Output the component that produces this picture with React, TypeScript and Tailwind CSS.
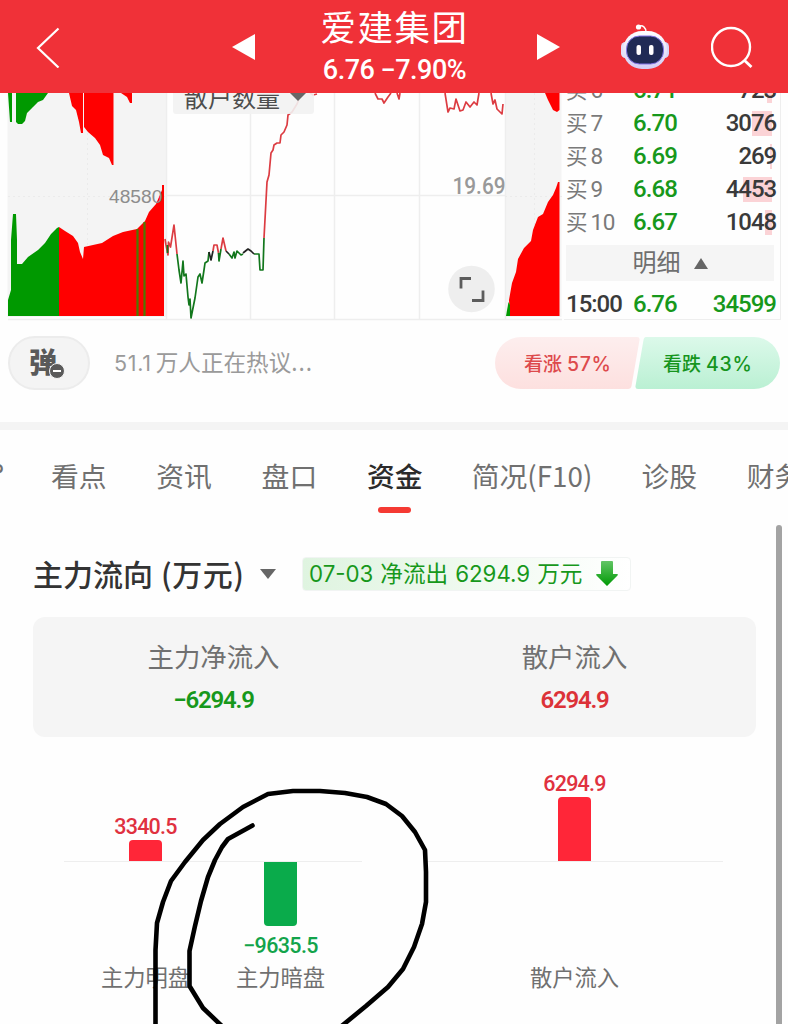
import React from "react";

interface OrderRow {
  level: string;
  price: string;
  volume: string;
  depth: number;
}

const orders: OrderRow[] = [
  { level: "6", price: "6.71", volume: "723", depth: 5 },
  { level: "7", price: "6.70", volume: "3076", depth: 20 },
  { level: "8", price: "6.69", volume: "269", depth: 2 },
  { level: "9", price: "6.68", volume: "4453", depth: 29 },
  { level: "10", price: "6.67", volume: "1048", depth: 7 },
];

const tabs = [
  { name: "看点", width: "w-[55px]" },
  { name: "资讯", width: "w-[55px]" },
  { name: "盘口", width: "w-[55px]" },
  { name: "资金", width: "w-[55px]", active: true },
  { name: "简况(F10)", width: "w-[119px]" },
  { name: "诊股", width: "w-[55px]" },
  { name: "财务", width: "w-[55px]" },
];

const RobotIcon = () => (
  <svg className="h-[48px] w-[50px]" viewBox="0 0 50 48">
    <defs>
      <linearGradient id="shell" x1="0" y1="0" x2="0" y2="1">
        <stop offset="0" stopColor="#ffffff" />
        <stop offset="1" stopColor="#d3cdf5" />
      </linearGradient>
    </defs>
    <circle cx="18.500" cy="4" r="2.600" fill="#fff" />
    <path d="M18 3.500c5-2 8 1 8 6" fill="none" stroke="#fff" strokeWidth="1.500" />
    <rect x="1" y="19" width="9" height="16" rx="4.500" fill="#e3dff9" />
    <rect x="40" y="19" width="9" height="16" rx="4.500" fill="#d9d5f7" />
    <rect x="3" y="8" width="44" height="38" rx="19" fill="url(#shell)" />
    <rect x="6.500" y="13" width="37" height="28" rx="13" fill="#202b55" stroke="#8374e6" strokeWidth="1" />
    <rect x="16.500" y="22" width="4.500" height="10" rx="2" fill="#fff" />
    <rect x="29" y="22" width="4.500" height="10" rx="2" fill="#fff" />
  </svg>
);

const Header = () => (
  <header className="flex h-[93px] items-center bg-[#f03138] text-white">
    <svg className="ml-9 h-[42px] w-6" viewBox="0 0 24 42" fill="none" stroke="#fff" strokeWidth="2.200">
      <path d="M22.500 2.500 2 22l20.500 19.500" />
    </svg>
    <svg className="ml-[172px] h-[26px] w-6" viewBox="0 0 24 26" fill="#fff">
      <path d="M0 13 23 0v26z" />
    </svg>
    <div className="ml-[50px] flex w-[177px] flex-col items-center">
      <h1 className="-mt-[3px] h-[46px] text-[35.500px] leading-[46px] font-normal tracking-[1.5px] whitespace-nowrap">爱建集团</h1>
      <p className="mt-[3px] h-[36px] font-[Roboto] text-[27px] leading-[36px] font-medium tracking-[-0.5px] whitespace-nowrap">
        6.76 −7.90%
      </p>
    </div>
    <svg className="ml-[54px] h-[26px] w-6" viewBox="0 0 24 26" fill="#fff">
      <path d="M23 13 0 0v26z" />
    </svg>
    <div className="ml-[59px]">
      <RobotIcon />
    </div>
    <svg className="ml-[41px] h-[42px] w-[42px]" viewBox="0 0 42 42" fill="none" stroke="#fff" strokeWidth="2.400">
      <circle cx="20" cy="21" r="19" />
      <path d="m33 34 7.500 7" strokeWidth="2.800" />
    </svg>
  </header>
);

// three panes: volume profile, intraday line, volume profile of the current day
const MarketChart = () => (
  <svg className="h-[229px] w-[564px] shrink-0" viewBox="0 93 564 229">
    <rect x="7.500" y="93" width="158.500" height="224" fill="#f4f4f4" />
    <rect x="505.500" y="93" width="56" height="224" fill="#f4f4f4" />
    <path
      d="M166.500 93v227M250.500 93v227M334.500 93v227M419.500 93v227M505.500 93v227M166 195.500h339M8 319.500h554"
      fill="none"
      stroke="#eeeeee"
      strokeWidth="1.500"
    />
    <path d="M8 196.500h158M87.500 93v224M505 196.500h57M534.500 93v224" stroke="#ebebeb" strokeDasharray="2 3" />

    <g fill="#009900">
      <path d="M8 93 10 122h2V93zM16 93v29l2 2h4l3-3 2-8 6-6 5-5 5-2 5-7z" />
      <path d="M8 316v-16l3-10v-50l2-26h3l1 26v24h5l6-7 10-7 7-7 6-9 6-6 2-1v89z" />
    </g>
    <g fill="#ff0000">
      <path d="M69 93l3 13 4 4 3 12 2 11h2V93zM84 93v34l4 5 7 6 5 7 3 10 6 3 3 7h1.500V93zM121 93l6 4 3 6h2V93z" />
      <path d="M59 227l6 4 8 5 5 7 2 9 3 7 1-12 18-4 11-7 10-4 14-3 8-8 4-9 7-8 6-14v-5h2v131H59z" />
      <path d="M510 316l-1-16 3-17 4-11 2-13 6-11 7-7 2-11 5-13 5-3 5-12 5-7 3-7 2-6h1.500v134z" />
      <path d="M545 93l3 7 5 10 4 2 2.500-2V93z" />
    </g>
    <path d="M137.500 229v87M144.500 222v94" stroke="#4c7a00" strokeWidth="2.200" />
    <path d="M506 316l2.500-14 1.500 3v11z" fill="#009900" />
    <text x="109" y="202.500" fontSize="19.200" fill="#8d8d8d" fontFamily="Liberation Sans, sans-serif">48580</text>

    <g fill="none" strokeWidth="1.700" strokeLinejoin="round">
      <path
        stroke="#dc3c42"
        d="M165 239l1 6 2 10 .5-13 2 5 3.500-22 3 29M213 251l1-6h3l1.500 8M221 249l2-11 3 13M264 238l3-56 2-7 2-22 2-3 1-5 3-2h3l1-8 3-3 3-7 1-10 4-3 5-8 2-5 2-6M310 93l3 2 4-1"
      />
      <path stroke="#dc3c42" d="M375 93l3 6 4 0 2 4 4-6 3-4M397 93l2 6 1-6M445 93l3 19 2-4 4 1 2-10 4 12 3-1 3-8 4 5 4-5 3 3 2-12M491 93l2 11 2-4 2 9 5 5 1-10" />
      <path
        stroke="#12771c"
        d="M167.500 245v8M177 254l2 16 2 13 2-22 1 15 2-2 2 23 1 8 1-6 1 19 4-20 3-21 2-3 2 9 2-13 1-7 3-2 1-9M218.500 253l.5 8 2-12M229 254l3 4 2-6 1 6 2-7 4 4 2-1M254 254h5l1 16h3l1-32"
      />
      <path stroke="#222" d="M209 252l2 8 2-9M226 251l3 3M243 253l5-4 3 2 3 3" />
    </g>

    <rect x="173" y="85" width="141" height="29" rx="3" fill="#f2f2f2" fillOpacity="0.900" />
    <text x="184" y="107" fontSize="24" fill="#4d4d4d" fontFamily="Noto Sans CJK SC, sans-serif">散户数量</text>
    <path d="M290 93h16l-8 8z" fill="#666" />
    <text
      x="452.500"
      y="193.500"
      fontSize="24"
      fontWeight="500"
      textLength="53"
      lengthAdjust="spacingAndGlyphs"
      fill="#999"
      fontFamily="Roboto, sans-serif"
    >
      19.69
    </text>
    <circle cx="471.500" cy="289" r="23.300" fill="#eeeeee" />
    <path d="M461 288.500V278.500h10M483 290.500v10h-11" fill="none" stroke="#5c5c5c" strokeWidth="2.800" />
  </svg>
);

const OrderBook = () => (
  <div className="h-[227px] w-[217px] border-r border-b border-[#eeeeee] pr-[4px] pl-[2px] font-[Roboto,'Noto_Sans_CJK_SC',sans-serif]">
    <div className="-mt-[19px]">
      {orders.map((row) => (
        <div key={row.level} className="flex h-[33px] items-center leading-[33px]">
          <span className="w-[67px] text-[21.5px] whitespace-nowrap text-[#7a7a7a]">
            买<span className="ml-[3px] text-[22.500px] tracking-[-0.5px]">{row.level}</span>
          </span>
          <span className="text-[24px] font-medium tracking-[-0.9px] text-[#17981b]">{row.price}</span>
          <div className="relative ml-auto flex h-[25px] items-center">
            <div className="absolute top-0 right-[4px] h-[25px] bg-[#fbd3d6]" style={{ width: row.depth }} />
            <span className="relative text-[24px] font-medium tracking-[-1.100px] text-[#3a3a3a]">{row.volume}</span>
          </div>
        </div>
      ))}
    </div>
    <div className="mt-[6px] flex h-[36px] w-[208px] items-center justify-center bg-[#f5f5f5] text-[24px] text-[#6f6f6f]">
      <span>明细</span>
      <svg className="ml-[13px] h-[11px] w-[14px]" viewBox="0 0 14 11" fill="#666">
        <path d="M7 0l7 11H0z" />
      </svg>
    </div>
    <div className="mt-[6px] flex h-[33px] items-center text-[24px] font-medium tracking-[-1px] text-[#17981b]">
      <span className="w-[67px] text-[#3a3a3a]">15:00</span>
      <span>6.76</span>
      <span className="ml-auto">34599</span>
    </div>
  </div>
);

const CommentBar = () => (
  <div className="flex h-[100px] items-start pt-[14px]">
    <div className="relative ml-2 flex h-[54px] w-[82px] items-center rounded-full border-2 border-[#ececec] bg-[#f4f4f4] pl-[19px]">
      <span className="-mt-1 text-[28px] leading-none font-black text-[#5a5a5a]">弹</span>
      <span className="absolute top-[25px] left-[39px] flex h-4 w-4 items-center justify-center rounded-full border border-[#f4f4f4] bg-[#5a5a5a]">
        <span className="h-[2px] w-2 bg-white" />
      </span>
    </div>
    <p className="-mt-[1px] ml-6 w-[220px] text-[22.600px] leading-[54px] whitespace-nowrap text-[#9a9a9a]">
      <span className="font-[Inter] text-[21.500px] tracking-[0.7px]">51.1</span>
      <span className="ml-[4px]">万人正在热议</span>
      <span className="tracking-[1px]">...</span>
    </p>
    <div className="relative ml-auto mr-[8px] mt-[1px] flex h-[52px] w-[285px] text-[19px] leading-[52px] font-medium">
      <svg className="absolute inset-0 h-[52px] w-[285px]" viewBox="0 0 285 52">
        <defs>
          <linearGradient id="rise" x1="0" y1="0" x2="0" y2="1">
            <stop offset="0" stopColor="#fdeeee" />
            <stop offset="1" stopColor="#fde0df" />
          </linearGradient>
          <linearGradient id="fall" x1="0" y1="0" x2="0" y2="1">
            <stop offset="0" stopColor="#dcf9ea" />
            <stop offset="1" stopColor="#baf0d3" />
          </linearGradient>
        </defs>
        <path d="M26 0H142q3 0 2.500 3l-8 46q-.5 3-3.500 3H26a26 26 0 0 1 0-52z" fill="url(#rise)" />
        <path d="M151 0H259a26 26 0 0 1 0 52H143q-3 0-2.500-3l8-46q.5-3 2.500-3z" fill="url(#fall)" />
      </svg>
      <span className="relative w-[143px] pl-[29px] whitespace-nowrap text-[#dd4a4c]">
        看涨<span className="ml-[5px] font-[Inter] text-[19.500px] tracking-[0.7px]">57%</span>
      </span>
      <span className="relative pl-[25px] whitespace-nowrap text-[#16951e]">
        看跌<span className="ml-[5px] font-[Inter] text-[19.500px] tracking-[0.7px]">43%</span>
      </span>
    </div>
  </div>
);

const TabBar = () => (
  <nav className="flex h-[95px] gap-[50.300px] overflow-hidden pt-[22px]">
    <span className="-mr-[3px] -ml-[49px] w-[53px] shrink-0 text-right font-[Inter] text-[24px] leading-[44px] text-[#707070]">
      ?
    </span>
    {tabs.map((tab) => (
      <div key={tab.name} className={`flex shrink-0 flex-col items-center ${tab.width}`}>
        <span
          className={`text-[27.800px] leading-[46px] whitespace-nowrap ${
            tab.active ? "font-medium text-[#2b2b2b]" : "text-[#707070]"
          }`}
        >
          {tab.name}
        </span>
        {tab.active && <span className="mt-[9px] h-[6px] w-[33px] rounded-full bg-[#f53a33]" />}
      </div>
    ))}
  </nav>
);

interface FlowBarProps {
  label: string;
  value: string;
  amount: number;
}

const FlowBar = ({ label, value, amount }: FlowBarProps) => {
  const up = amount > 0;
  return (
    <div className="flex w-[135px] flex-col items-center">
      <div className="flex h-[125px] flex-col items-center justify-end">
        {up && (
          <>
            <span className="-mb-[1px] font-[Roboto] text-[21.500px] leading-[28px] font-medium tracking-[-0.8px] text-[#e0313f]">
              {value}
            </span>
            <div className="w-[33px] rounded-t bg-[#ff2638]" style={{ height: amount }} />
          </>
        )}
      </div>
      <div className="flex h-[98px] flex-col items-center">
        {!up && (
          <>
            <div className="w-[33px] rounded-b bg-[#0aab4b]" style={{ height: -amount }} />
            <span className="mt-[6px] font-[Roboto] text-[21.500px] leading-[28px] font-medium tracking-[-0.6px] text-[#12a44b]">
              {value}
            </span>
          </>
        )}
      </div>
      <span className="-mt-[1px] text-[22.300px] leading-[34px] whitespace-nowrap text-[#707070]">{label}</span>
    </div>
  );
};

const FundFlow = () => (
  <section>
    <div className="flex h-[92px] items-center pt-[5px] pl-[33px]">
      <h2 className="-mt-[2px] w-[212px] text-[30px] leading-[40px] font-medium whitespace-nowrap text-[#333]">
        主力流向<span className="ml-[8px] tracking-[0.5px]">(万元)</span>
      </h2>
      <svg className="ml-[15px] h-[10px] w-4" viewBox="0 0 16 10" fill="#666">
        <path d="M0 0h16L8 10z" />
      </svg>
      <div className="ml-[26px] flex h-[34px] w-[329px] items-center rounded-sm border border-[#f1f4f3] bg-linear-to-r from-[#dff4e0] to-white pl-[6px] text-[22.600px] leading-[32px] whitespace-nowrap text-[#17981b]">
        <span className="-mt-[1px] w-[273px]">
          <span className="font-[Inter] text-[22.300px]">07-03</span>
          <span className="mx-[7px]">净流出</span>
          <span className="font-[Inter] text-[22.300px]">6294.9</span>
          <span className="ml-[7px]">万元</span>
        </span>
        <svg className="ml-[14px] h-[25px] w-[22px]" viewBox="0 0 22 25">
          <defs>
            <linearGradient id="down" x1="0" y1="0" x2="0" y2="1">
              <stop offset="0" stopColor="#62c565" />
              <stop offset="1" stopColor="#009a05" />
            </linearGradient>
          </defs>
          <path d="M6 0h10q1 0 1 1v12h4q1.500 0 .5 1.500L11 25 .5 14.500Q-.5 13 1 13h4V1q0-1 1-1z" fill="url(#down)" />
        </svg>
      </div>
    </div>
    <div className="ml-[33px] flex h-[120px] w-[723px] rounded-xl bg-[#f5f5f5] pt-[19px]">
      <div className="flex w-[361px] flex-col items-center">
        <span className="text-[26.400px] leading-[40px] text-[#707070]">主力净流入</span>
        <span className="mt-[6px] font-[Roboto] text-[24px] leading-[36px] font-semibold tracking-[-1.200px] text-[#17981b]">
          −6294.9
        </span>
      </div>
      <div className="flex w-[361px] flex-col items-center">
        <span className="text-[26.400px] leading-[40px] text-[#707070]">散户流入</span>
        <span className="mt-[6px] font-[Roboto] text-[24px] leading-[36px] font-semibold tracking-[-1.200px] text-[#dc3238]">
          6294.9
        </span>
      </div>
    </div>
    <div className="ml-[64px] flex gap-[64px]">
      <div className="relative flex w-[298px] justify-center">
        <div className="absolute top-[124px] h-px w-full bg-[#eeeeee]" />
        <FlowBar label="主力明盘" value="3340.5" amount={22} />
        <FlowBar label="主力暗盘" value="−9635.5" amount={-64} />
      </div>
      <div className="relative flex w-[297px] justify-center">
        <div className="absolute top-[124px] h-px w-full bg-[#eeeeee]" />
        <FlowBar label="散户流入" value="6294.9" amount={65} />
      </div>
    </div>
  </section>
);

// freehand circle drawn over the page
const Marker = () => (
  <svg
    className="pointer-events-none absolute top-0 left-0 h-[1024px] w-[789px]"
    viewBox="0 0 789 1024"
    fill="none"
    stroke="#000"
    strokeWidth="4.600"
    strokeLinecap="round"
    strokeLinejoin="round"
  >
    <polyline points="155.500,1030 155.500,950 157,923 163,902 171,881 185,862 203,840 220,824 243,807 268,794 293,791 320,791 345,793 367,797 386,804 402,816 415,832 425,850 426,872 426,902 422,924 414,947 403,969 388,987 366,1006 338,1029" />
    <polyline points="252.500,825.500 228,839 222,847 215,860 208,877 201,901 195,926 189.500,951 189.500,986 203,1008 225,1029" />
  </svg>
);

const App = () => {
  return (
    <div className="relative h-[1024px] w-[788px] overflow-hidden bg-[#fefefe] font-['Noto_Sans_CJK_SC',sans-serif]">
      <Header />
      <div className="flex h-[229px] overflow-hidden">
        <MarketChart />
        <OrderBook />
      </div>
      <CommentBar />
      <div className="h-[8px] bg-[#f4f4f4]" />
      <TabBar />
      <div className="flex h-[500px] justify-between">
        <FundFlow />
        <div className="mr-[6px] h-[520px] w-[6px] shrink-0 rounded-t-full bg-[#a3a3a3]" />
      </div>
      <Marker />
    </div>
  );
};

export default App;
